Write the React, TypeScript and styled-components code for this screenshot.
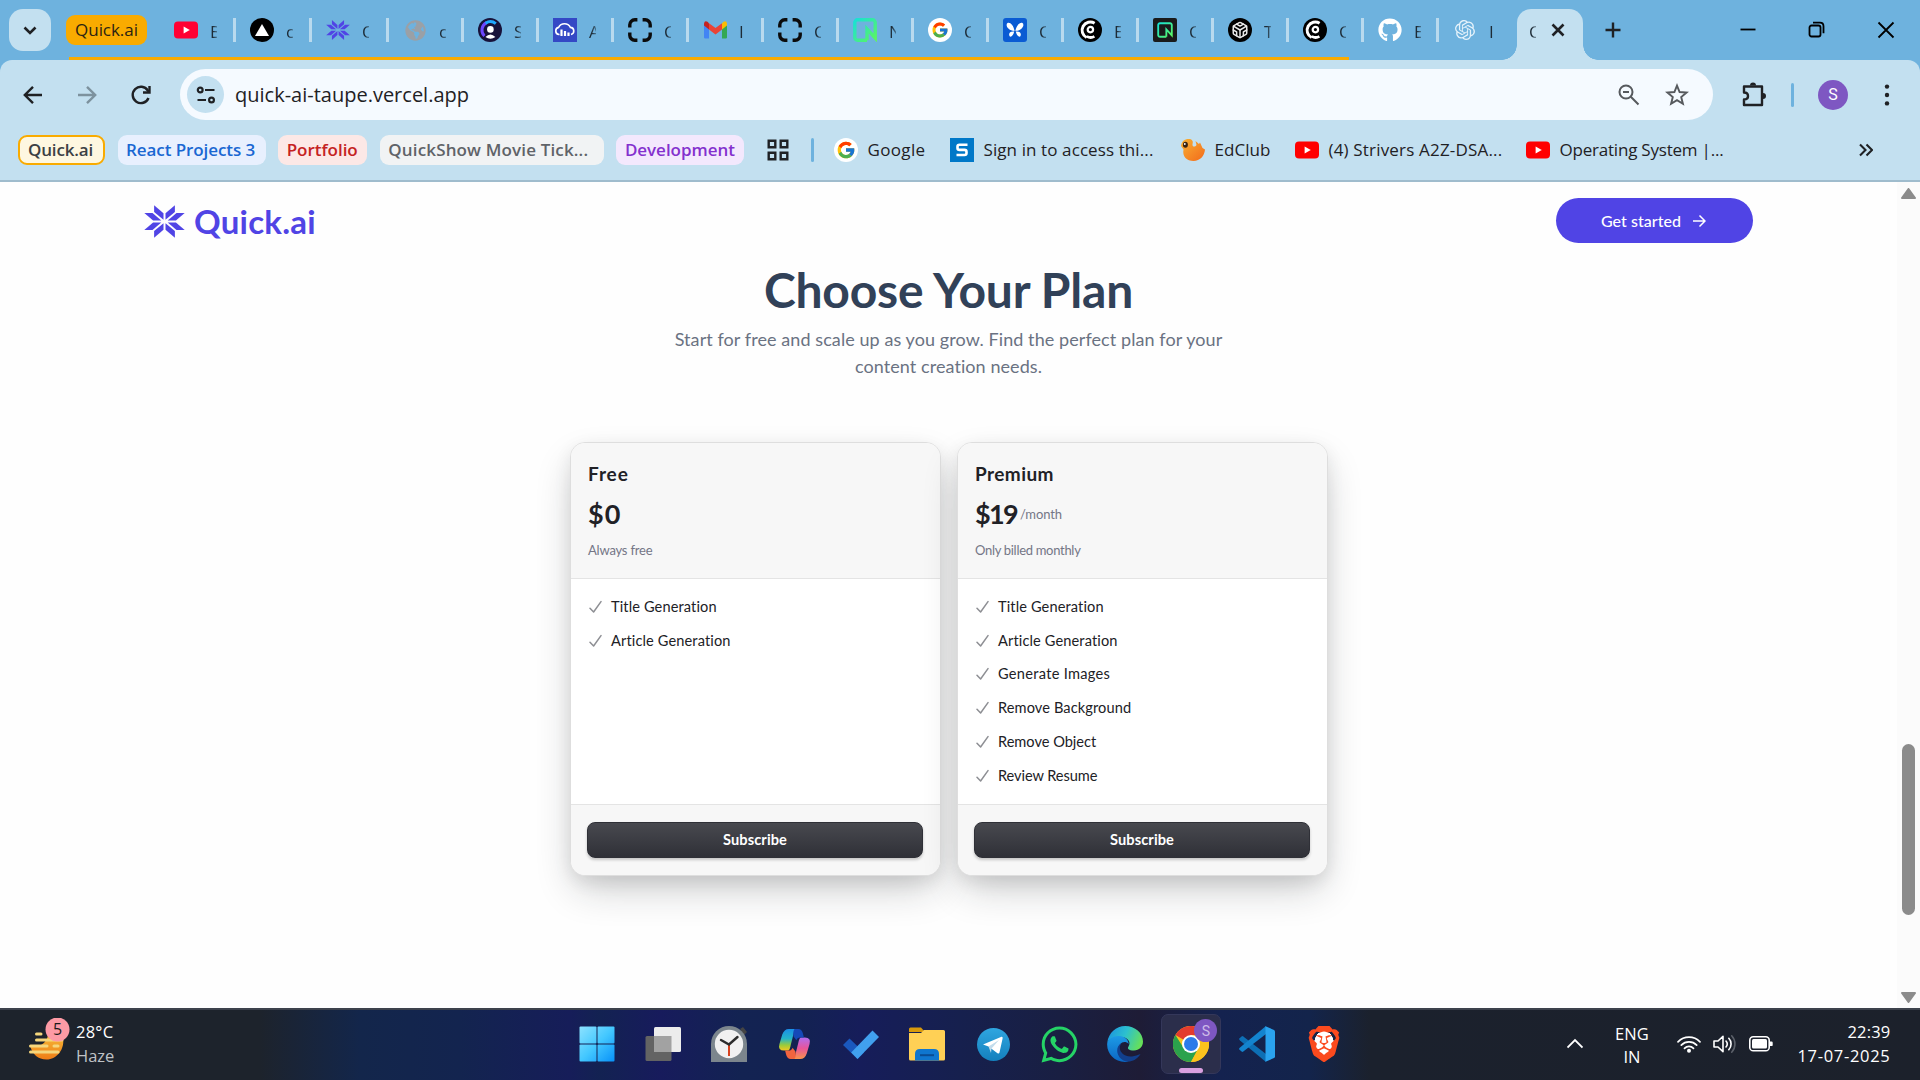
import React from "react";
import styled, { createGlobalStyle, css } from "styled-components";
import { FaGithub, FaWhatsapp, FaGlobeAmericas } from "react-icons/fa";
import { FcGoogle } from "react-icons/fc";
import { SiOpenai, SiBrave } from "react-icons/si";
import { FiCodesandbox } from "react-icons/fi";

const ui = `"Open Sans", "Noto Sans", sans-serif`;
const brand = `Lato, "Open Sans", sans-serif`;

const GlobalStyle = createGlobalStyle`
  * { box-sizing: border-box; }
  body { margin: 0; width: 1920px; height: 1080px; overflow: hidden; background: #fff; }
  h1, h2, p, ul { margin: 0; padding: 0; font-weight: inherit; }
  svg { display: block; flex: none; }
`;

const Screen = styled.div`
  display: flex;
  flex-direction: column;
  width: 1920px;
  height: 1080px;
  overflow: hidden;
`;

const Label = styled.span<{ ls?: number }>`
  white-space: nowrap;
  letter-spacing: ${(p) => p.ls ?? 0}px;
`;

/* ---------- tab strip ---------- */
const TabStrip = styled.div`
  display: flex;
  height: 60px;
  background: #6eb2de;
  font: 400 17px/24px ${ui};
  color: #1d2b36;
`;
const SearchTabs = styled.div`
  display: grid;
  place-items: center;
  width: 42px;
  height: 42px;
  margin: 9px 0 0 9px;
  border-radius: 14px;
  background: #c3e0f0;
`;
const Group = styled.div`
  display: flex;
  flex: none;
  position: relative;
  width: 1298px;
  margin-left: 15px;
  &::after {
    content: "";
    position: absolute;
    left: 3px;
    right: 15px;
    bottom: 0;
    height: 3px;
    background: #f9ab00;
  }
`;
const GroupChip = styled.div`
  display: flex;
  align-items: center;
  justify-content: center;
  flex: none;
  width: 81px;
  height: 30px;
  margin: 15px 13px 0 0;
  border-radius: 9px;
  background: #f9ab00;
  color: #2b2413;
`;
const Tab = styled.div<{ w: number; last?: boolean }>`
  display: flex;
  align-items: center;
  flex: none;
  width: ${(p) => p.w}px;
  height: 24px;
  margin-top: 18px;
  padding-left: 14px;
  border-right: ${(p) => (p.last ? "none" : "3px solid #b9daee")};
`;
const Fav = styled.span<{ bg?: string; r?: number; fg?: string }>`
  display: grid;
  place-items: center;
  flex: none;
  width: 24px;
  height: 24px;
  overflow: hidden;
  border-radius: ${(p) => p.r ?? 0}px;
  background: ${(p) => p.bg ?? "transparent"};
  color: ${(p) => p.fg ?? "#000"};
`;
const TabTitle = styled.span`
  width: 7px;
  margin: 3px 0 0 12px;
  mask-image: linear-gradient(90deg, #000 40%, transparent 150%);
`;
const ActiveTab = styled.div`
  position: relative;
  display: flex;
  align-items: center;
  gap: 12px;
  width: 66px;
  height: 51px;
  margin: 9px 0 0 1px;
  padding-bottom: 9px;
  border-radius: 14px 14px 0 0;
  background: #c3e0f0;
  &::before, &::after {
    content: "";
    position: absolute;
    bottom: 0;
    width: 15px;
    height: 15px;
  }
  &::before { left: -15px; background: radial-gradient(circle at 0 0, transparent 14.5px, #c3e0f0 15px); }
  &::after { right: -15px; background: radial-gradient(circle at 100% 0, transparent 14.5px, #c3e0f0 15px); }
`;
const StripIcon = styled.div<{ ml: number }>`
  display: flex;
  align-items: center;
  height: 60px;
  margin-left: ${(p) => p.ml}px;
`;

/* ---------- toolbar ---------- */
const ToolbarWrap = styled.div`
  height: 122px;
  background: #6eb2de;
`;
const Toolbar = styled.div`
  height: 122px;
  border-radius: 12px 12px 0 0;
  background: #c3e0f0;
  border-bottom: 2px solid #9fbccd;
`;
const AddressRow = styled.div`
  display: flex;
  align-items: center;
  height: 60px;
  padding: 9px 0 0 21px;
`;
const ToolIcon = styled.span<{ ml: number }>`
  flex: none;
  margin-left: ${(p) => p.ml}px;
`;
const Omnibox = styled.div`
  display: flex;
  align-items: center;
  flex: none;
  width: 1533px;
  height: 51px;
  margin-left: 27px;
  padding: 0 24px 0 7px;
  border-radius: 26px;
  background: #f5faff;
  font: 400 20px/30px ${ui};
  color: #1f2124;
`;
const SiteInfo = styled.span`
  display: grid;
  place-items: center;
  width: 37px;
  height: 37px;
  margin-right: 11px;
  border-radius: 50%;
  background: #c3e0f0;
`;
const Grow = styled.span`
  flex: 1;
`;
const Divider = styled.span<{ m: string }>`
  flex: none;
  width: 3px;
  height: 24px;
  margin: ${(p) => p.m};
  border-radius: 2px;
  background: #6eb2de;
`;
const Avatar = styled.span`
  display: grid;
  place-items: center;
  width: 30px;
  height: 30px;
  border-radius: 50%;
  background: #7e57c2;
  color: #fff;
  font: 400 16px/20px Roboto, sans-serif;
`;
const BookmarkRow = styled.div`
  display: flex;
  align-items: center;
  height: 60px;
  padding: 0 47px 0 18px;
  font: 400 17px/24px ${ui};
  color: #1f2124;
`;
const FolderChip = styled.div<{ w: number; bg: string; fg: string; line?: string }>`
  display: flex;
  align-items: center;
  flex: none;
  width: ${(p) => p.w}px;
  height: 30px;
  margin-right: 12.6px;
  padding-left: ${(p) => (p.line ? 8 : 8.5)}px;
  border-radius: 9px;
  background: ${(p) => p.bg};
  color: ${(p) => p.fg};
  font-weight: 600;
  ${(p) => p.line && css`border: 2px solid ${p.line};`}
`;
const Bookmark = styled.div<{ w: number }>`
  display: flex;
  align-items: center;
  flex: none;
  gap: 9px;
  width: ${(p) => p.w}px;
`;

/* ---------- page ---------- */
const Viewport = styled.div`
  display: flex;
  height: 826px;
  background: #fefefe;
`;
const Page = styled.main`
  flex: 1;
  font-family: ${brand};
`;
const Nav = styled.nav`
  display: flex;
  align-items: center;
  justify-content: space-between;
  height: 77px;
  padding: 0 144px;
`;
const Logo = styled.div`
  display: flex;
  align-items: center;
  gap: 9px;
  padding-top: 1px;
  color: #5044e5;
  font: 700 33px/40px ${brand};
`;
const GetStarted = styled.button`
  display: flex;
  align-items: center;
  justify-content: center;
  gap: 11px;
  width: 197px;
  height: 45px;
  padding: 0 2px 0 0;
  border: 0;
  border-radius: 23px;
  background: #5044e5;
  color: #fff;
  font: 500 16px/22px ${brand};
`;
const Intro = styled.section`
  display: flex;
  flex-direction: column;
  align-items: center;
  padding-top: 4px;
`;
const Title = styled.h1`
  color: #314158;
  font: 700 48px/54px ${brand};
`;
const Lead = styled.p`
  display: flex;
  flex-direction: column;
  align-items: center;
  margin-top: 9px;
  color: #6a7282;
  font: 400 18px/27px ${brand};
`;
const Plans = styled.section`
  display: flex;
  justify-content: center;
  gap: 16px;
  margin-top: 62px;
`;
const Card = styled.article`
  display: flex;
  flex-direction: column;
  width: 371px;
  height: 434px;
  border: 1px solid #dedede;
  border-radius: 15px;
  background: #fff;
  overflow: hidden;
  box-shadow: 0 6px 17px rgba(0, 0, 0, 0.08), 0 17px 39px -6px rgba(25, 28, 33, 0.24);
`;
const CardHead = styled.header`
  height: 136px;
  padding: 17px 17.5px 0;
  border-bottom: 1px solid #e4e4e4;
  background: #f7f7f7;
  color: #212126;
`;
const PlanName = styled.h2`
  font: 700 19px/27px ${brand};
`;
const Price = styled.div`
  display: flex;
  align-items: center;
  gap: 3px;
  margin-top: 9px;
  font: 700 27px/36px ${brand};
`;
const Small = styled.span`
  display: block;
  color: #747686;
  font: 400 13px/18px ${brand};
`;
const Billing = styled.div`
  margin-top: 9px;
`;
const Features = styled.ul`
  flex: 1;
  padding: 11px 17px 0 18px;
  list-style: none;
`;
const Feature = styled.li`
  display: flex;
  align-items: center;
  gap: 9.5px;
  height: 33.8px;
  color: #212126;
  font: 400 14.6px/20px ${brand};
`;
const CardFoot = styled.footer`
  height: 71px;
  padding: 17px 16px 0 16.5px;
  border-top: 1px solid #e4e4e4;
  background: #f7f7f7;
`;
const Subscribe = styled.button`
  display: grid;
  place-items: center;
  width: 336px;
  height: 36px;
  border: 1px solid #2f3037;
  border-radius: 8px;
  background: linear-gradient(#48494f, #2f3037);
  color: #fff;
  font: 700 14.6px/20px ${brand};
  box-shadow: 0 2px 3px rgba(0, 0, 0, 0.2);
`;
const Scrollbar = styled.aside`
  display: flex;
  flex-direction: column;
  align-items: center;
  width: 23px;
  padding-top: 6px;
  background: #fbfbfb;
`;
const Thumb = styled.div`
  width: 13px;
  height: 171px;
  margin: 545px 0 77px;
  border-radius: 7px;
  background: #8b8b8b;
`;

/* ---------- taskbar ---------- */
const Taskbar = styled.footer`
  display: flex;
  height: 72px;
  border-top: 2px solid #3d424c;
  background: linear-gradient(90deg, #1d232c 0, #1d232c 260px, #13264b 360px, #13244f 460px, #161d59 570px, #132252 600px, #171b5c 660px, #132352 740px, #132252 800px, #161d5a 860px, #16204e 960px, #191f42 1060px, #1e1c36 1140px, #14224f 1220px, #13244b 1310px, #1b212d 1370px, #1c212b 1920px);
  color: #fff;
  font: 400 16.5px/24px ${ui};
`;
const Weather = styled.div`
  display: flex;
  flex: none;
  gap: 6px;
  width: 563.5px;
  padding: 8px 0 0 28px;
`;
const Stack = styled.div<{ align?: string; w?: number; mt?: number; lh?: number }>`
  display: flex;
  flex-direction: column;
  flex: none;
  align-items: ${(p) => p.align ?? "flex-start"};
  width: ${(p) => (p.w ? p.w + "px" : "auto")};
  margin-top: ${(p) => p.mt ?? 0}px;
  line-height: ${(p) => p.lh ?? 24}px;
`;
const Muted = styled.span`
  color: #bfc2c6;
`;
const Apps = styled.div`
  display: flex;
  flex: none;
  width: 794px;
`;
const AppButton = styled.div<{ active?: boolean }>`
  position: relative;
  display: grid;
  place-items: center;
  flex: none;
  width: 60px;
  height: 60px;
  margin: 4px 3.06px 0;
  border-radius: 7px;
  ${(p) => p.active && css`
    background: #2b2e4b;
    border: 1px solid #34375a;
    &::after {
      content: "";
      position: absolute;
      bottom: 0;
      width: 24px;
      height: 5px;
      border-radius: 3px;
      background: #d9a0e0;
    }
  `}
`;
const ProfileDot = styled.span`
  position: absolute;
  top: 4px;
  right: 3px;
  display: grid;
  place-items: center;
  width: 23px;
  height: 23px;
  border-radius: 50%;
  background: #7e57c2;
  color: #cdbce8;
  font: 400 14px/18px Roboto, sans-serif;
`;
const BraveMark = styled.span`
  display: grid;
  place-items: center;
  width: 36px;
  height: 36px;
  background: radial-gradient(ellipse 10px 13px at 50% 50%, #fff 98%, transparent 100%);
`;
const Tray = styled.div`
  display: flex;
  flex: 1;
  justify-content: flex-end;
  padding-right: 29.5px;
`;
const TrayIcon = styled.span<{ mr: number }>`
  display: flex;
  align-items: center;
  height: 68px;
  margin-right: ${(p) => p.mr}px;
`;
const Language = styled.div`
  margin-right: 28px;
`;

/* ---------- drawings ---------- */
const Star = ({ w, h }: { w: number; h: number }) => (
  <svg width={w} height={h} viewBox="-20.5 -16.5 41 33" preserveAspectRatio="none" fill="#5044e5">
    {[[1, 1], [-1, 1], [1, -1], [-1, -1]].map(([x, y]) => (
      <g key={`${x}${y}`} transform={`scale(${x} ${y})`}>
        <path d="M-10.4-16.3-1-8.2V-1.8L-10.4-9.6Z" />
        <path d="M-20.2-8.6H-12L-3.2-1.1H-11.4Z" />
      </g>
    ))}
  </svg>
);
const YouTube = ({ c = "#ff0033" }: { c?: string }) => (
  <svg width="24" height="24" viewBox="0 0 24 24"><rect y="3.6" width="24" height="16.8" rx="4" fill={c} /><path d="M9.600 8.400v7.200l6.200-3.600z" fill="#fff" /></svg>
);
const Clerk = () => (
  <svg width="24" height="24" viewBox="0 0 24 24" fill="none" stroke="#fff">
    <path d="M16.600 5.200A8.200 8.200 0 1 0 8.600 19.500" strokeWidth="3" /><circle cx="12.400" cy="11.600" r="2.700" strokeWidth="2.200" /><path d="M8.800 18.400q3.800 2.200 7.600 0" strokeWidth="2.800" />
  </svg>
);
const ClerkBlue = () => (
  <svg width="24" height="24" viewBox="0 0 24 24" fill="none">
    <path d="M8.500 4.600A8.400 8.400 0 0 0 6.400 18" stroke="#6c47ff" strokeWidth="3" /><path d="M17.800 5.600A8.600 8.600 0 0 0 7.600 5.200" stroke="#1fa8ff" strokeWidth="3" />
    <circle cx="12.400" cy="11.400" r="3.300" fill="#fff" /><path d="M7.400 19q5-5 10 0-5 3.600-10 0z" fill="#fff" />
  </svg>
);
const Cloud = () => (
  <svg width="22" height="22" viewBox="0 0 22 22" fill="none" stroke="#fff" strokeWidth="1.6">
    <path d="M5.500 15.500H5A3.600 3.600 0 0 1 4.600 8.400 6.600 6.600 0 0 1 16.400 8.400 3.600 3.600 0 0 1 17 15.500" /><path d="M7.500 10.500v6.500M11 12v5M14.500 13.500v3.500" strokeWidth="2.200" />
  </svg>
);
const Frame = () => (
  <svg width="24" height="24" viewBox="0 0 24 24" fill="none" stroke="#0b0b0b" strokeWidth="3.4">
    <path d="M1.800 9.600V7A5 5 0 0 1 6.800 1.800H9.400M14.600 1.800H17A5 5 0 0 1 22.200 7V9.600M22.200 14.400V17A5 5 0 0 1 17 22.200H14.600M9.400 22.200H7A5 5 0 0 1 1.800 17V14.400" />
  </svg>
);
const Gmail = () => (
  <svg width="23" height="18" viewBox="0 0 23 18">
    <path d="M0 3v13.500Q0 17.500 1.200 17.500H5V7z" fill="#4285f4" /><path d="M23 3v13.500q0 1-1.200 1H18V7z" fill="#34a853" />
    <path d="M18 2.200V8.500L23 4.500V2.500Q22.300-1 19.500.8z" fill="#fbbc04" /><path d="M5 8.500V2.200L11.500 7 18 2.200V8.500L11.500 13.500z" fill="#ea4335" /><path d="M0 2.500V4.500L5 8.500V2.200L3.500.8Q.7-1 0 2.500z" fill="#c5221f" />
  </svg>
);
const Neon = ({ s = 24, sw = 3.4 }: { s?: number; sw?: number }) => (
  <svg width={s} height={s} viewBox="0 0 24 24" fill="none" stroke="url(#neon)" strokeWidth={sw}>
    <defs><linearGradient id="neon" gradientUnits="userSpaceOnUse" x1="0" y1="0" x2="24" y2="24"><stop stopColor="#12dfe0" /><stop offset="1" stopColor="#62f755" /></linearGradient></defs>
    <path d="M14 22.200H4.500A2.700 2.700 0 0 1 1.800 19.500V4.500A2.700 2.700 0 0 1 4.500 1.800H19.500A2.700 2.700 0 0 1 22.200 4.500V20L14 11V22.200" />
  </svg>
);
const Butterfly = () => (
  <svg width="20" height="20" viewBox="0 0 20 20" fill="#fff">
    <path d="M9.600 11C8.500 5 5 1.800 2.500 3c-2.500 2 .5 7.500 7.100 8zM10.400 11C11.500 5 15 1.800 17.500 3c2.500 2-.5 7.500-7.100 8zM9.200 11.500C5.500 11 3.500 13 4.300 15.500s3.900 1 4.900-4zM10.800 11.500C14.500 11 16.500 13 15.700 15.500s-3.900 1-4.900-4z" />
  </svg>
);
const Line = ({ d, w = 24, c = "#1f2124", sw = 2.4 }: { d: string; w?: number; c?: string; sw?: number }) => (
  <svg width={w} height={w} viewBox={`0 0 ${w} ${w}`} fill="none" stroke={c} strokeWidth={sw}><path d={d} /></svg>
);
const Reload = () => (
  <svg width="24" height="24" viewBox="0 0 24 24" fill="none" stroke="#1f2124" strokeWidth="2.4"><path d="M19.500 15A8.200 8.200 0 1 1 18.800 7.500L20 9" /><path d="M20.500 3V9.500H14" /></svg>
);
const Tune = () => (
  <svg width="20" height="20" viewBox="0 0 20 20" fill="none" stroke="#1f2124" strokeWidth="2.2"><circle cx="4.200" cy="5" r="2.400" /><path d="M9 5H18.500M1.500 15H10" /><circle cx="15.500" cy="15" r="2.400" /></svg>
);
const ZoomOut = () => (
  <svg width="24" height="24" viewBox="0 0 24 24" fill="none" stroke="#56595d" strokeWidth="2"><circle cx="9" cy="9" r="6.500" /><path d="M6 9H12M13.800 13.800 21.500 21.500" /></svg>
);
const StarOutline = () => (
  <svg width="24" height="24" viewBox="0 0 24 24" fill="none" stroke="#56595d" strokeWidth="1.9"><path d="M12 2.600 14.600 9 21.600 9.500 16.200 14 17.900 20.800 12 17.100 6.100 20.800 7.800 14 2.400 9.500 9.400 9Z" /></svg>
);
const Puzzle = () => (
  <svg width="26" height="26" viewBox="0 0 26 26" fill="none" stroke="#1f2124" strokeWidth="2.4" strokeLinejoin="round">
    <path d="M3 4.500H21V23H3V17.500C6.500 17.500 7 16 7 14S6.500 10.500 3 10.500Z" /><path d="M9 3.500a3 3 0 0 1 6 0zM22 11a3 3 0 0 1 0 6z" fill="#1f2124" stroke="none" />
  </svg>
);
const Dots = () => (
  <svg width="24" height="24" viewBox="0 0 24 24" fill="#1f2124"><circle cx="12" cy="3.600" r="2.200" /><circle cx="12" cy="12" r="2.200" /><circle cx="12" cy="20.400" r="2.200" /></svg>
);
const Squares = () => (
  <svg width="22" height="22" viewBox="0 0 22 22" fill="none" stroke="#1f2124" strokeWidth="2.4"><path d="M1.700 1.700H8.300V8.300H1.700ZM13.700 1.700H20.300V8.300H13.700ZM1.700 13.700H8.300V20.300H1.700ZM13.700 13.700H20.300V20.300H13.700Z" /></svg>
);
const Restore = () => (
  <svg width="24" height="24" viewBox="0 0 24 24" fill="none" stroke="#000" strokeWidth="1.8"><rect x="4.500" y="7.500" width="11" height="11" rx="2" /><path d="M8 4.700H15Q18.500 4.700 18.500 8.200V15.200" /></svg>
);
const SLogo = () => (
  <svg width="24" height="24" viewBox="0 0 24 24" fill="none" stroke="#fff" strokeWidth="2.6"><path d="M17.500 6.800H9.500Q7.500 6.800 7.500 8.800V9.900Q7.500 11.900 9.500 11.900H14.500Q16.500 11.900 16.500 13.900V15Q16.500 17 14.500 17H6.500" /></svg>
);
const EdClub = () => (
  <svg width="24" height="24" viewBox="0 0 24 24">
    <defs><linearGradient id="ed" x1="0" y1="0" x2="1" y2="1"><stop stopColor="#f9b233" /><stop offset="1" stopColor="#f26a1b" /></linearGradient></defs>
    <path d="M0 8C.5 3.500 3.500 1 7.500 1 11 1 12.500 3 11.500 6 11 9 14 9.500 15.500 7L14.500 3 18 6 19 4.500 21.500 10 24 11.500C23.500 18 19 23 12.500 23 6 23 1 18.500 2.500 11.500z" fill="url(#ed)" /><ellipse cx="4.400" cy="6.800" rx="2.500" ry="3" fill="#3a2413" /><circle cx="3.800" cy="6" r=".9" fill="#fff" />
  </svg>
);
const Tick = () => (
  <svg width="13" height="14" viewBox="0 0 13 14" fill="none" stroke="#8e8f94" strokeWidth="1.5" strokeLinecap="round" strokeLinejoin="round"><path d="M1 8.200 4.600 12 12 1.600" /></svg>
);
const Win = () => (
  <svg width="36" height="36" viewBox="0 0 36 36">
    <defs><linearGradient id="win" gradientUnits="userSpaceOnUse" x1="0" y1="0" x2="36" y2="36"><stop stopColor="#8fe3ff" /><stop offset=".5" stopColor="#44c8ff" /><stop offset="1" stopColor="#0690f8" /></linearGradient></defs>
    <g fill="url(#win)"><rect x=".5" y=".5" width="17" height="17" rx="1" /><rect x="18.500" y=".5" width="17" height="17" rx="1" /><rect x=".5" y="18.500" width="17" height="17" rx="1" /><rect x="18.500" y="18.500" width="17" height="17" rx="1" /></g>
  </svg>
);
const TaskView = () => (
  <svg width="36" height="36" viewBox="0 0 36 36"><rect x=".5" y="10" width="26" height="25" rx="1.500" fill="#636363" /><rect x="9" y="1" width="27" height="25" rx="1.500" fill="#ececec" /><path d="M9 10H26.500V26H9z" fill="#a2a2a2" /></svg>
);
const Clock = () => (
  <svg width="36" height="36" viewBox="0 0 36 36"><path d="M29 3l3-2 4 5-3 3z" fill="#444" /><path d="M0 36V18a18 18 0 0 1 36 0V36z" fill="#7c868d" /><circle cx="18" cy="18" r="14.200" fill="#f1f1f1" /><path d="M18 18v12" stroke="#d8431f" strokeWidth="2" /><path d="M10 14l8 4.500L26.500 11" stroke="#2d2d2d" strokeWidth="2.4" fill="none" strokeLinecap="round" /></svg>
);
const Copilot = () => (
  <svg width="35" height="32" viewBox="0 0 36 34">
    <defs>
      <linearGradient id="cpa" x1="0" y1="0" x2="0" y2="1"><stop stopColor="#1a8fe8" /><stop offset=".45" stopColor="#25b5c8" /><stop offset=".75" stopColor="#9bcb3a" /><stop offset="1" stopColor="#f4c81e" /></linearGradient>
      <linearGradient id="cpb" x1="0" y1="0" x2="0" y2="1"><stop stopColor="#b06df0" /><stop offset=".5" stopColor="#e8559a" /><stop offset="1" stopColor="#f9944a" /></linearGradient>
    </defs>
    <path d="M25 10h4q7 0 5 7l-3 10q-2 6-7 6h-10q4 0 5-5l3-12q1-6 3-6z" fill="url(#cpb)" />
    <path d="M11 24H7q-7 0-5-7L5 7Q7 1 12 1h10q-4 0-5 5l-3 12q-1 6-3 6z" fill="url(#cpa)" />
    <path d="M15 1h7q4 0 5 5l1 4h-4q-3 0-4 3l-3-4q-1-5 1-8z" fill="#1549b8" /><path d="M21 33H14q-4 0-5-5l-1-4h4q3 0 4-3l3 4q1 5-1 8z" fill="#f2643f" />
  </svg>
);
const Todo = () => (
  <svg width="36" height="30" viewBox="0 0 36 30"><path d="M0 16 6.500 9.500 21 23.500 14.500 30z" fill="#1a58bd" /><path d="M8.200 23.500 29.500 1.500 36 8 14.500 30z" fill="#41a0ee" /></svg>
);
const Folder = () => (
  <svg width="36" height="34" viewBox="0 0 36 34"><path d="M0 2Q0 .5 1.500.5H12l4 4.500H0z" fill="#d89a0c" /><path d="M0 6H12l3-3H34.500Q36 3 36 4.500V32q0 1.500-1.500 1.500h-33Q0 33.500 0 32z" fill="#ffd055" /><path d="M6 33.500V27q0-5 5-5H25q5 0 5 5v6.500z" fill="#0f76cf" /><path d="M11 28.200H25" stroke="#0a4c93" strokeWidth="2" /></svg>
);
const Telegram = () => (
  <svg width="33" height="33" viewBox="0 0 33 33"><defs><linearGradient id="tg" x1="0" y1="0" x2="0" y2="1"><stop stopColor="#2fa6e0" /><stop offset="1" stopColor="#1480bd" /></linearGradient></defs><circle cx="16.500" cy="16.500" r="16.500" fill="url(#tg)" /><path d="M6 16.500 24.500 8.800Q26 8.400 25.600 10.400L22.500 24.600Q22 26 20.500 25.200L11.500 18.500z" fill="#fff" /><path d="M11.500 18.500 22 12 14.500 20.500 14 25z" fill="#c2dcec" /></svg>
);
const Edge = () => (
  <svg width="36" height="36" viewBox="0 0 36 36">
    <defs>
      <linearGradient id="ea" x1="0" y1=".2" x2="1" y2=".5"><stop stopColor="#1b93e0" /><stop offset=".5" stopColor="#2cc0cf" /><stop offset="1" stopColor="#66e05a" /></linearGradient>
      <linearGradient id="eb" x1="0" y1="0" x2="0" y2="1"><stop stopColor="#1d9be6" /><stop offset="1" stopColor="#0b66c4" /></linearGradient>
    </defs>
    <path d="M.3 16.500C1.500 7 9 0 18.200 0 28 0 36 7 36 15.500c0 5.500-4 9-9 9-5.500 0-7-2-5.500-4 3-4.500-1-9.500-8-9.500C7 11 2 13 .3 16.500z" fill="url(#ea)" />
    <path d="M.3 16.500C2 12.500 7 9.500 12.500 10c5 .4 9 3.500 9.200 8C17 13 10.500 18 11.500 25c.8 5.500 5 9.500 10.500 10.500C9 38-1.200 28 .3 16.500z" fill="url(#eb)" />
    <path d="M14.500 17c-5 7 2 14.500 10.500 13.500 3-.3 6-1.500 8.500-2.500-4 7-12 9-17 6.500-7.500-4-8.500-14-2-17.500z" fill="#123f8c" />
  </svg>
);
const Chrome = () => (
  <svg width="36" height="36" viewBox="0 0 36 36"><circle cx="18" cy="18" r="18" fill="#fcc31e" /><path d="M18 18 2.400 9A18 18 0 0 1 33.600 9z" fill="#e33b2e" /><path d="M18 18 10.800 22.200 2.400 9A18 18 0 0 0 18 36L25.200 22.200z" fill="#2ba24c" /><path d="M18 9H33.600A18 18 0 0 1 18 36L25.800 22.500z" fill="#fcc31e" /><circle cx="18" cy="18" r="9" fill="#fff" /><circle cx="18" cy="18" r="7" fill="#2d7bea" /></svg>
);
const VSCode = () => (
  <svg width="36" height="36" viewBox="0 0 36 36"><path d="M0 12.800 2.600 10.400Q3.400 9.800 4.300 10.400L27 28V36L1 14.500Q0 13.600 0 12.800z" fill="#0d6fb5" /><path d="M0 23.200 2.600 25.600Q3.400 26.200 4.300 25.600L27 8V0L1 21.500Q0 22.400 0 23.200z" fill="#1384cf" /><path d="M26.500.2 35 4Q36 4.600 36 5.600V30.400Q36 31.400 35 32L26.500 35.800Z" fill="#2aa3ef" /></svg>
);
const Haze = () => (
  <svg width="42" height="46" viewBox="0 0 42 46">
    <defs><linearGradient id="hz" x1="0" y1="0" x2="0" y2="1"><stop stopColor="#f6bf3a" /><stop offset="1" stopColor="#ef7d17" /></linearGradient></defs>
    <path d="M20 14C26 17 32 17 35 20 37 31 29 41.500 18.500 41.500 10 41.500 4.500 36 2.500 29 12 30 21 24 20 14z" fill="url(#hz)" />
    <path d="M8.500 16H13M8.500 22H34M2.500 28H19M26 28H30M2.500 34H30" stroke="#f5d67c" strokeWidth="3" strokeLinecap="round" />
    <circle cx="29.500" cy="11.500" r="12" fill="#fd9aa5" />
    <text x="29.500" y="17" textAnchor="middle" fontSize="16" fontFamily="Open Sans, sans-serif" fill="#1b1b1b">5</text>
  </svg>
);
const Wifi = () => (
  <svg width="24" height="24" viewBox="0 0 24 24" fill="none" stroke="#fff" strokeWidth="1.7" strokeLinecap="round"><path d="M1 9.800A15.500 15.500 0 0 1 23 9.800M4.300 13.100A10.900 10.900 0 0 1 19.700 13.100M7.500 16.300A6.400 6.400 0 0 1 16.500 16.300" /><circle cx="12" cy="18.800" r="2" fill="#fff" stroke="none" /></svg>
);
const Speaker = () => (
  <svg width="24" height="24" viewBox="0 0 24 24" fill="none" stroke="#fff" strokeWidth="1.6" strokeLinecap="round" strokeLinejoin="round"><path d="M1 9H5L10 4.300V19.700L5 15H1Z" /><path d="M13 9A4.600 4.600 0 0 1 13 15M15.800 6.300A8.300 8.300 0 0 1 15.800 17.700" /><path d="M18.700 3.800A12 12 0 0 1 18.700 20.200" stroke="#5b6069" /></svg>
);
const Battery = () => (
  <svg width="24" height="24" viewBox="0 0 24 24"><rect x=".8" y="4.800" width="19.400" height="14" rx="3.400" fill="none" stroke="#fff" strokeWidth="1.6" /><rect x="3" y="7" width="15" height="9.600" rx="1.500" fill="#fff" /><path d="M21 9.500h1.500q1.200 0 1.200 1.200v2.200q0 1.200-1.200 1.200H21z" fill="#fff" /></svg>
);

/* ---------- data ---------- */
const tabs: [React.ReactNode, string, number][] = [
  [<Fav><YouTube /></Fav>, "B", 76],
  [<Fav bg="#000" r={12}><svg width="14" height="12" viewBox="0 0 14 12"><path d="M7 0 14 12H0z" fill="#fff" /></svg></Fav>, "c", 76],
  [<Fav><Star w={24} h={20} /></Fav>, "Q", 77],
  [<Fav fg="#9aa0a6"><FaGlobeAmericas size={21} /></Fav>, "c", 75],
  [<Fav bg="#17123a" r={12}><ClerkBlue /></Fav>, "S", 75],
  [<Fav bg="#3448c5"><Cloud /></Fav>, "A", 75],
  [<Fav><Frame /></Fav>, "C", 75],
  [<Fav><Gmail /></Fav>, "I", 75],
  [<Fav><Frame /></Fav>, "C", 75],
  [<Fav><Neon /></Fav>, "N", 75],
  [<Fav bg="#fff" r={12}><FcGoogle size={18} /></Fav>, "C", 75],
  [<Fav bg="#0a5bd3" r={3}><Butterfly /></Fav>, "C", 75],
  [<Fav bg="#000" r={12}><Clerk /></Fav>, "E", 75],
  [<Fav bg="#1a1a1a" r={2}><Neon s={16} sw={2.8} /></Fav>, "C", 75],
  [<Fav bg="#000" r={12} fg="#e8e8e8"><FiCodesandbox size={18} /></Fav>, "T", 75],
  [<Fav bg="#000" r={12}><Clerk /></Fav>, "C", 75],
];
const looseTabs: [React.ReactNode, string, number][] = [
  [<Fav fg="#fff"><FaGithub size={24} /></Fav>, "E", 75],
  [<Fav fg="#e6f3fb"><SiOpenai size={20} /></Fav>, "I", 77],
];
const folders = [
  { text: "Quick.ai", w: 87, bg: "#fef7e0", fg: "#3c4043", line: "#f9ab00", ls: -0.17 },
  { text: "React Projects 3", w: 148, bg: "#e8f0fe", fg: "#1967d2", ls: -0.09 },
  { text: "Portfolio", w: 89, bg: "#fce8e6", fg: "#c5221f", ls: -0.03 },
  { text: "QuickShow Movie Tick...", w: 224, bg: "#f1f3f4", fg: "#5f6368", ls: 0.15 },
  { text: "Development", w: 128, bg: "#f3e8fd", fg: "#8430ce", ls: -0.03 },
];
const bookmarks: [React.ReactNode, string, number, number][] = [
  [<Fav bg="#fff" r={12}><FcGoogle size={20} /></Fav>, "Google", 116, 0.35],
  [<Fav bg="#0078c8"><SLogo /></Fav>, "Sign in to access thi...", 231, 0.1],
  [<Fav><EdClub /></Fav>, "EdClub", 114, 0.05],
  [<Fav><YouTube c="#ff0000" /></Fav>, "(4) Strivers A2Z-DSA...", 231, 0.18],
  [<Fav><YouTube c="#ff0000" /></Fav>, "Operating System |...", 200, -0.21],
];
const spacing: Record<string, number> = {
  "Title Generation": 0.12, "Article Generation": 0.12, "Generate Images": 0.28,
  "Remove Background": 0.1, "Remove Object": -0.01, "Review Resume": -0.08,
};
const plans = [
  { name: "Free", nls: 0.9, price: "$0", pls: 1, per: "", note: "Always free", tls: -0.2, features: ["Title Generation", "Article Generation"] },
  { name: "Premium", nls: 0.42, price: "$19", pls: -1.7, per: "/month", note: "Only billed monthly", tls: -0.3, features: ["Title Generation", "Article Generation", "Generate Images", "Remove Background", "Remove Object", "Review Resume"] },
];
const apps = [<Win />, <TaskView />, <Clock />, <Copilot />, <Todo />, <Folder />, <Telegram />, <FaWhatsapp size={41} color="#25d366" />, <Edge />];

export default function App() {
  return (
    <Screen>
      <GlobalStyle />
      <TabStrip>
        <SearchTabs><Line d="M6.500 9.500 12 15 17.500 9.500" sw={2.6} /></SearchTabs>
        <Group>
          <GroupChip><Label ls={-0.05}>Quick.ai</Label></GroupChip>
          {tabs.map(([icon, t, w], i) => <Tab key={i} w={w}>{icon}<TabTitle>{t}</TabTitle></Tab>)}
        </Group>
        {looseTabs.map(([icon, t, w], i) => <Tab key={i} w={w} last={i === 1}>{icon}<TabTitle>{t}</TabTitle></Tab>)}
        <ActiveTab><TabTitle>C</TabTitle><Line w={20} d="M4.500 4.500 15.500 15.500M15.500 4.500 4.500 15.500" sw={2.6} /></ActiveTab>
        <StripIcon ml={18}><Line d="M12 4.500V19.500M4.500 12H19.500" /></StripIcon>
        <StripIcon ml={111}><Line d="M4.500 11.500H19.500" c="#000" sw={1.8} /></StripIcon>
        <StripIcon ml={45}><Restore /></StripIcon>
        <StripIcon ml={44.5}><Line d="M4.500 4.500 19.500 19.500M19.500 4.500 4.500 19.500" c="#000" sw={1.8} /></StripIcon>
      </TabStrip>
      <ToolbarWrap>
        <Toolbar>
          <AddressRow>
            <Line d="M21 12H4.500M12 3.800 3.800 12 12 20.200" />
            <ToolIcon ml={29.5}><Line d="M3 12H19.500M12 3.800 20.200 12 12 20.200" c="#7d929e" /></ToolIcon>
            <ToolIcon ml={30.5}><Reload /></ToolIcon>
            <Omnibox>
              <SiteInfo><Tune /></SiteInfo>
              <Label>quick-ai-taupe.vercel.app</Label>
              <Grow />
              <ZoomOut />
              <ToolIcon ml={24}><StarOutline /></ToolIcon>
            </Omnibox>
            <ToolIcon ml={28}><Puzzle /></ToolIcon>
            <Divider m="0 24px 0 24px" />
            <Avatar>S</Avatar>
            <ToolIcon ml={27}><Dots /></ToolIcon>
          </AddressRow>
          <BookmarkRow>
            {folders.map((f) => <FolderChip key={f.text} w={f.w} bg={f.bg} fg={f.fg} line={f.line}><Label ls={f.ls}>{f.text}</Label></FolderChip>)}
            <ToolIcon ml={10}><Squares /></ToolIcon>
            <Divider m="0 20.5px 0 22px" />
            {bookmarks.map(([icon, t, w, ls]) => <Bookmark key={t} w={w}>{icon}<Label ls={ls}>{t}</Label></Bookmark>)}
            <Grow />
            <Line w={14} d="M1 1.500 6.500 7 1 12.500M7.500 1.500 13 7 7.500 12.500" sw={2.1} />
          </BookmarkRow>
        </Toolbar>
      </ToolbarWrap>
      <Viewport>
        <Page>
          <Nav>
            <Logo><Star w={41} h={33} /><Label ls={0.25}>Quick.ai</Label></Logo>
            <GetStarted><Label ls={0.04}>Get started</Label><Line w={14} d="M1 7H13M7.500 1.500 13 7 7.500 12.500" c="#fff" sw={1.5} /></GetStarted>
          </Nav>
          <Intro>
            <Title><Label ls={-0.2}>Choose Your Plan</Label></Title>
            <Lead>
              <Label ls={0.08}>Start for free and scale up as you grow. Find the perfect plan for your</Label>
              <Label ls={0.07}>content creation needs.</Label>
            </Lead>
          </Intro>
          <Plans>
            {plans.map((p) => (
              <Card key={p.name}>
                <CardHead>
                  <PlanName><Label ls={p.nls}>{p.name}</Label></PlanName>
                  <Price><Label ls={p.pls}>{p.price}</Label>{p.per && <Small><Label ls={-0.1}>{p.per}</Label></Small>}</Price>
                  <Billing><Small><Label ls={p.tls}>{p.note}</Label></Small></Billing>
                </CardHead>
                <Features>{p.features.map((f) => <Feature key={f}><Tick /><Label ls={spacing[f]}>{f}</Label></Feature>)}</Features>
                <CardFoot><Subscribe><Label ls={0.1}>Subscribe</Label></Subscribe></CardFoot>
              </Card>
            ))}
          </Plans>
        </Page>
        <Scrollbar>
          <svg width="15" height="11" viewBox="0 0 15 11"><path d="M7.500 1 14 10H1z" fill="#8b8b8b" stroke="#8b8b8b" strokeWidth="2" strokeLinejoin="round" /></svg>
          <Thumb />
          <svg width="15" height="11" viewBox="0 0 15 11"><path d="M7.500 10 14 1H1z" fill="#8b8b8b" stroke="#8b8b8b" strokeWidth="2" strokeLinejoin="round" /></svg>
        </Scrollbar>
      </Viewport>
      <Taskbar>
        <Weather><Haze /><Stack mt={2}><Label ls={0.25}>28°C</Label><Muted><Label>Haze</Label></Muted></Stack></Weather>
        <Apps>
          {apps.map((a, i) => <AppButton key={i}>{a}</AppButton>)}
          <AppButton active><Chrome /><ProfileDot>S</ProfileDot></AppButton>
          <AppButton><VSCode /></AppButton>
          <AppButton><BraveMark><SiBrave size={36} color="#fb4a1e" /></BraveMark></AppButton>
        </Apps>
        <Tray>
          <TrayIcon mr={32}><Line w={16} d="M.5 11.500 8 4 15.500 11.500" c="#fff" sw={1.8} /></TrayIcon>
          <Language><Stack w={34} align="center" mt={12} lh={23}><Label ls={0.1}>ENG</Label><Label>IN</Label></Stack></Language>
          <TrayIcon mr={12}><Wifi /></TrayIcon>
          <TrayIcon mr={12}><Speaker /></TrayIcon>
          <TrayIcon mr={25}><Battery /></TrayIcon>
          <Stack w={92.5} align="flex-end" mt={10}><Label ls={0.2}>22:39</Label><Label ls={0.7}>17-07-2025</Label></Stack>
        </Tray>
      </Taskbar>
    </Screen>
  );
}
